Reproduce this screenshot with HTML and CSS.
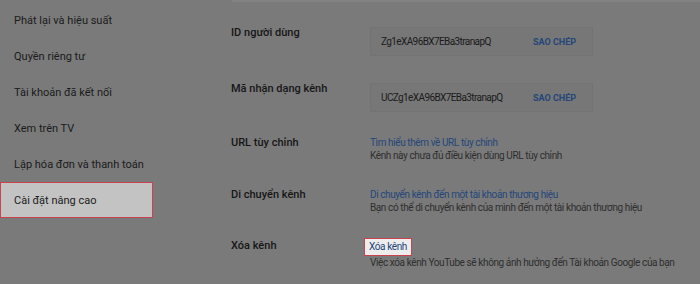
FILE: index.html
```html
<!DOCTYPE html>
<html lang="vi">
<head>
  <meta charset="UTF-8" />
  <title>Cài đặt nâng cao</title>
  <link rel="stylesheet" href="styles.css">
</head>
<body>
  <div class="page">
    <nav class="sidebar">
      <a class="nav-item" href="#">Phát lại và hiệu suất</a>
      <a class="nav-item" href="#">Quyền riêng tư</a>
      <a class="nav-item" href="#">Tài khoản đã kết nối</a>
      <a class="nav-item" href="#">Xem trên TV</a>
      <a class="nav-item" href="#">Lập hóa đơn và thanh toán</a>
      <a class="nav-item active" href="#">Cài đặt nâng cao</a>
    </nav>

    <main class="content">
      <div class="top-strip"></div>

      <div class="row row-id">
        <div class="label">ID người dùng</div>
        <div class="value-box">
          <span class="value">Zg1eXA96BX7EBa3tranapQ</span>
          <button class="copy">SAO CHÉP</button>
        </div>
      </div>

      <div class="row row-channel">
        <div class="label">Mã nhận dạng kênh</div>
        <div class="value-box">
          <span class="value">UCZg1eXA96BX7EBa3tranapQ</span>
          <button class="copy">SAO CHÉP</button>
        </div>
      </div>

      <div class="row row-url">
        <div class="label">URL tùy chỉnh</div>
        <div class="info">
          <a class="link" href="#">Tìm hiểu thêm về URL tùy chỉnh</a>
          <p class="sub">Kênh này chưa đủ điều kiện dùng URL tùy chỉnh</p>
        </div>
      </div>

      <div class="row row-move">
        <div class="label">Di chuyển kênh</div>
        <div class="info">
          <a class="link" href="#">Di chuyển kênh đến một tài khoản thương hiệu</a>
          <p class="sub">Bạn có thể di chuyển kênh của mình đến một tài khoản thương hiệu</p>
        </div>
      </div>

      <div class="row row-delete">
        <div class="label">Xóa kênh</div>
        <div class="info">
          <a class="link link-boxed" href="#">Xóa kênh</a>
          <p class="sub">Việc xóa kênh YouTube sẽ không ảnh hưởng đến Tài khoản Google của bạn</p>
        </div>
      </div>
    </main>
  </div>
</body>
</html>
```

FILE: styles.css
```css
* {
  margin: 0; padding: 0; box-sizing: border-box;
  font-family: Roboto, 'Liberation Sans', sans-serif;
}

body {
  width: 700px;
  height: 284px;
  overflow: hidden;
  background: #7a7a7a;
  color: #1b1b1b;
  font-size: 11px;
}

.page {
  display: flex;
  height: 100%;
}

/* left menu */
.sidebar {
  width: 153px;
  padding-top: 2px;
  display: flex;
  flex-direction: column;
}

.nav-item {
  height: 36px;
  display: flex;
  align-items: center;
  padding-left: 14px;
  color: #1b1b1b;
  text-decoration: none;
  font-size: 11px;
}

.nav-item.active {
  background: #c3c3c3;
  border: 1px solid #c9434f;
  padding-left: 13px;
}

/* right side */
.content {
  flex: 1;
  padding-left: 78px;
}

.top-strip {
  height: 2px;
  margin-left: 1px;
  background: #828282;
  margin-bottom: 25px;
}

.row {
  display: grid;
  grid-template-columns: 139px 1fr;
  align-items: start;
}

.label {
  font-weight: 500;
  font-size: 11px;
  line-height: 12px;
  color: #161616;
}

.row-id { height: 56px; }
.row-channel { height: 53px; }
.row-url { height: 52px; }
.row-move { height: 50px; }

.row-url .label { padding-top: 1px; }
.row-move .label { padding-top: 1px; }

.value-box {
  width: 223px;
  height: 29px;
  display: flex;
  align-items: center;
  justify-content: space-between;
  padding: 0 16px 0 10px;
  background: #777;
  border: 1px solid #737373;
}

.value {
  font-size: 10px;
  letter-spacing: -0.6px;
  color: #1b1b1b;
}

.copy {
  background: none;
  border: none;
  font-size: 9px;
  font-weight: 700;
  color: #24467a;
  cursor: pointer;
}

.info {
  display: flex;
  flex-direction: column;
  align-items: flex-start;
  white-space: nowrap;
}

.link {
  color: #24467a;
  text-decoration: none;
  font-size: 10px;
  letter-spacing: -0.4px;
  line-height: 13px;
}

.sub {
  font-size: 10px;
  letter-spacing: -0.4px;
  line-height: 13px;
  color: #2e2e2e;
}

.row-delete .label { padding-top: 2px; }

.link-boxed {
  background: #ededed;
  border: 1px solid #c9434f;
  margin-left: -6px;
  padding: 1px 4px 2px;
  line-height: 13px;
}

.row-delete .sub { margin-top: 0; }
```
